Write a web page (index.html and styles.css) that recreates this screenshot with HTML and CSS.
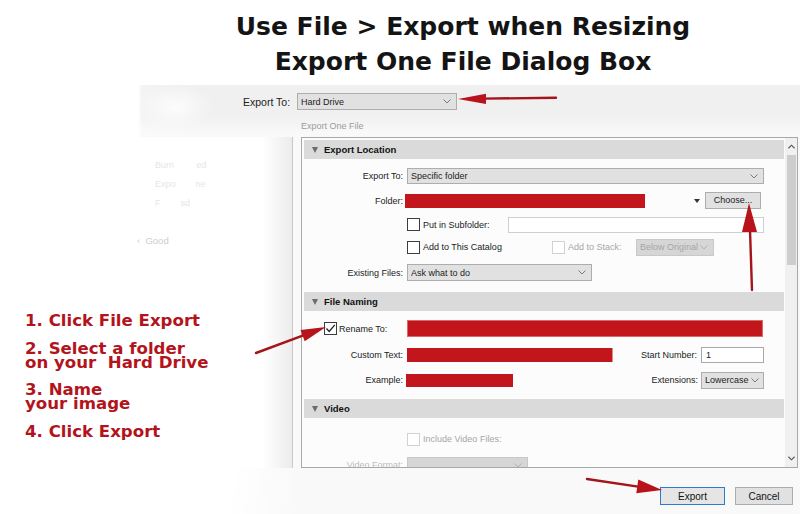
FILE: index.html
```html
<!DOCTYPE html>
<html lang="en">
<head>
<meta charset="utf-8">
<title>Export One File Dialog Box</title>
<link rel="stylesheet" href="styles.css">
</head>
<body>
<header class="title">
  <h1>Use File &gt; Export when Resizing<br>Export One File Dialog Box</h1>
</header>

<main class="dlg">
  <div class="dest">
    <span class="dest-lbl">Export To:</span>
    <div class="combo dest-combo"><span>Hard Drive</span><svg class="chev" viewBox="0 0 8 5"><polyline points="0.5,0.5 4,4 7.5,0.5"/></svg></div>
  </div>
  <div class="caption">Export One File</div>

  <div class="work">
    <aside class="side">
      <div class="ghost">
        <div>Burn&nbsp;&nbsp;&nbsp;&nbsp;&nbsp;&nbsp;&nbsp;&nbsp;&nbsp;ed</div>
        <div>Expo&nbsp;&nbsp;&nbsp;&nbsp;&nbsp;&nbsp;&nbsp;&nbsp;ne</div>
        <div>F&nbsp;&nbsp;&nbsp;&nbsp;&nbsp;&nbsp;&nbsp;&nbsp;sd</div>
      </div>
      <div class="ghost-good">‹&nbsp;&nbsp;Good</div>
      <div class="steps">
        <p>1. Click File Export</p>
        <p>2. Select a folder<br>on your&nbsp; Hard Drive</p>
        <p>3. Name<br>your image</p>
        <p>4. Click Export</p>
      </div>
    </aside>

    <section class="panel">
      <div class="panel-body">
        <div class="sec-h"><span class="tri"></span>Export Location</div>
        <div class="sec sec-loc">
          <div class="row h24">
            <span class="lbl">Export To:</span>
            <div class="combo ml4 w357"><span>Specific folder</span><svg class="chev" viewBox="0 0 8 5"><polyline points="0.5,0.5 4,4 7.5,0.5"/></svg></div>
          </div>
          <div class="row h25">
            <span class="lbl">Folder:</span>
            <div class="redact folder"></div>
            <span class="mini-tri"></span>
            <div class="btn-sm">Choose...</div>
          </div>
          <div class="row h23 ind">
            <label class="chk w101"><span class="box"></span>Put in Subfolder:</label>
            <div class="field w256"></div>
          </div>
          <div class="row h22 ind">
            <label class="chk w145"><span class="box"></span>Add to This Catalog</label>
            <label class="chk w84 dis"><span class="box"></span>Add to Stack:</label>
            <div class="combo combo-dis w78"><span>Below Original</span><svg class="chev" viewBox="0 0 8 5"><polyline points="0.5,0.5 4,4 7.5,0.5"/></svg></div>
          </div>
          <div class="row h29">
            <span class="lbl">Existing Files:</span>
            <div class="combo ml4 w185"><span>Ask what to do</span><svg class="chev" viewBox="0 0 8 5"><polyline points="0.5,0.5 4,4 7.5,0.5"/></svg></div>
          </div>
        </div>

        <div class="sec-h"><span class="tri"></span>File Naming</div>
        <div class="sec sec-name">
          <div class="row h25 ind-rename">
            <label class="chk w83"><span class="box box-on"><svg viewBox="0 0 11 11"><polyline points="1.5,5.5 4.2,8.5 9.8,1.8"/></svg></span>Rename To:</label>
            <div class="redact rename"></div>
          </div>
          <div class="row h28">
            <span class="lbl">Custom Text:</span>
            <div class="redact custom"></div>
            <span class="rlbl w84">Start Number:</span>
            <div class="field num">1</div>
          </div>
          <div class="row h22">
            <span class="lbl">Example:</span>
            <div class="redact example"></div>
            <span class="rlbl w185">Extensions:</span>
            <div class="combo ext"><span>Lowercase</span><svg class="chev" viewBox="0 0 8 5"><polyline points="0.5,0.5 4,4 7.5,0.5"/></svg></div>
          </div>
        </div>

        <div class="sec-h"><span class="tri"></span>Video</div>
        <div class="sec sec-video">
          <div class="row h26 ind">
            <label class="chk dis"><span class="box"></span>Include Video Files:</label>
          </div>
          <div class="row h26">
            <span class="lbl lbl-dis">Video Format:</span>
            <div class="combo combo-dis ml4 w121"><span></span><svg class="chev" viewBox="0 0 8 5"><polyline points="0.5,0.5 4,4 7.5,0.5"/></svg></div>
          </div>
        </div>
      </div>

      <div class="scroll">
        <div class="sc-btn"><svg viewBox="0 0 8 5"><polyline points="0.5,4.5 4,1 7.5,4.5"/></svg></div>
        <div class="sc-thumb"></div>
        <div class="sc-fill"></div>
        <div class="sc-btn"><svg viewBox="0 0 8 5"><polyline points="0.5,0.5 4,4 7.5,0.5"/></svg></div>
      </div>
    </section>
  </div>

  <div class="actions">
    <button class="btn btn-primary">Export</button>
    <button class="btn">Cancel</button>
  </div>
</main>

<svg class="arrows" viewBox="0 0 800 514" width="800" height="514">
  <g class="shaft">
    <path d="M484 98.6 L556 97.8"/>
    <path d="M750 230 L752 290"/>
    <path d="M256 353 L304 335.2"/>
    <path d="M587 479 L638 486.6"/>
  </g>
  <g class="head">
    <polygon points="458,99 486,93.8 486,104"/>
    <polygon points="749,203 742,232 757,232"/>
    <polygon points="326,327 300.5,330.1 304.7,341.3"/>
    <polygon points="662,490 638.3,479.5 636.3,493.3"/>
  </g>
</svg>
</body>
</html>
```

FILE: styles.css
```css
* { box-sizing: border-box; margin: 0; padding: 0; }

html, body {
  width: 800px;
  height: 514px;
  overflow: hidden;
  background: #fff;
}

body {
  position: relative;
  font-family: "Liberation Sans", Arial, sans-serif;
  color: #1e1e1e;
}

/* ---------- title ---------- */
.title {
  height: 85px;
  padding: 9px 0 0 126px;
  text-align: center;
}
.title h1 {
  font: bold 25px/35px "DejaVu Sans", sans-serif;
  color: #141414;
}

/* ---------- dialog surface ---------- */
.dlg {
  height: 429px;
  display: flex;
  flex-direction: column;
  background:
    radial-gradient(circle 260px at 40px 385px, #fff 74%, rgba(255,255,255,0) 100%),
    radial-gradient(ellipse 40px 22px at 175px 22px, rgba(255,255,255,.8), rgba(255,255,255,0)),
    linear-gradient(to bottom, rgba(255,255,255,0) 30px, rgba(255,255,255,.6) 48px),
    linear-gradient(to right, #fff 138px, #f3f3f3 142px, #f0f0f0 200px);
}

.dest {
  display: flex;
  align-items: center;
  padding: 7px 0 0 243px;
  height: 26px;
}
.dest-lbl {
  font-size: 10.5px;
  margin-right: 7px;
  color: #222;
}
.dest-combo {
  width: 160px;
  height: 19px;
  font-size: 10px;
  padding-left: 6px;
}

.caption {
  margin: 9px 0 5px;
  padding-left: 301px;
  height: 12px;
  font-size: 9px;
  line-height: 12px;
  color: #9c9c9c;
}

.work {
  display: flex;
  height: 331px;
}

/* ---------- left side ---------- */
.side {
  width: 293px;
  flex: none;
  border-right: 1px solid #c8c8c8;
  background: linear-gradient(to right, #fff 0, #fff 262px, #ececec 292px);
  padding-top: 19px;
}
.ghost {
  padding-left: 155px;
  font-size: 9px;
  line-height: 19px;
  color: #e6e6e6;
}
.ghost-good {
  margin-top: 18px;
  padding-left: 137px;
  font-size: 9.5px;
  line-height: 19px;
  color: #cdcdcd;
}
.steps {
  margin-top: 64px;
  padding-left: 25px;
  font: bold 16.6px/14px "DejaVu Sans", sans-serif;
  color: #b3141c;
  white-space: nowrap;
}
.steps p { margin-bottom: 13.5px; }

/* ---------- panel ---------- */
.panel {
  margin-left: 8px;
  width: 497px;
  height: 331px;
  border: 1px solid #a8a8a8;
  background: #fcfcfc;
  display: flex;
  overflow: hidden;
}
.panel-body {
  flex: 1;
  padding: 2px 1px 0 2px;
  overflow: hidden;
}

.sec-h {
  height: 19px;
  background: #dadada;
  display: flex;
  align-items: center;
  padding-left: 8px;
  font-size: 9.5px;
  font-weight: bold;
  color: #111;
}
.tri {
  width: 0;
  height: 0;
  border-left: 3.5px solid transparent;
  border-right: 3.5px solid transparent;
  border-top: 6px solid #6c6c6c;
  margin-right: 6px;
}

.sec-loc { padding: 5px 0 5px; }
.sec-name { padding: 5px 0 8px; }
.sec-video { padding-top: 8px; }

.row {
  display: flex;
  align-items: center;
  font-size: 9px;
  color: #222;
  white-space: nowrap;
}
.h22 { height: 22px; }
.h23 { height: 23px; }
.h24 { height: 24px; }
.h25 { height: 25px; }
.h26 { height: 26px; }
.h28 { height: 28px; }
.h29 { height: 29px; }

.ind { padding-left: 103px; }
.ind-rename { padding-left: 20px; }

.lbl {
  width: 99px;
  flex: none;
  text-align: right;
}
.lbl-dis { color: #bdbdbd; }
.rlbl {
  flex: none;
  text-align: right;
}
.ml4 { margin-left: 4px; }

.w78 { width: 78px; }
.w83 { width: 83px; }
.w84 { width: 84px; }
.w101 { width: 101px; }
.w121 { width: 121px; }
.w145 { width: 145px; }
.w185 { width: 185px; }
.w256 { width: 256px; }
.w357 { width: 357px; }

/* controls */
.combo {
  flex: none;
  height: 17px;
  display: flex;
  align-items: center;
  justify-content: space-between;
  padding: 0 5px 0 3px;
  background: #e1e1e1;
  border: 1px solid #adadad;
  font-size: 9px;
  color: #222;
  overflow: hidden;
}
.row .w357 { height: 16px; }
.combo span { overflow: hidden; }
.chev {
  width: 8px;
  height: 5px;
  flex: none;
  fill: none;
  stroke: #7a7a7a;
  stroke-width: 1;
}
.combo-dis {
  background: #d6d6d6;
  border-color: #c8c8c8;
  color: #a6a6a6;
}
.combo-dis .chev { stroke: #b0b0b0; }

.ext {
  width: 63px;
  margin-left: 3px;
  padding-right: 4px;
}
.ext span { width: 44px; }

.field {
  flex: none;
  height: 16px;
  background: #fff;
  border: 1px solid #cfcfcf;
  padding-left: 4px;
  font-size: 9px;
  line-height: 14px;
}
.num {
  width: 63px;
  margin-left: 4px;
  border-color: #a9a9a9;
}

.redact { flex: none; background: #c3161c; }
.folder { margin-left: 2px; width: 240px; height: 14px; }
.rename { width: 356px; height: 17px; border: 1px solid #d46a6a; }
.custom { margin-left: 4px; width: 206px; height: 14px; border-right: 1px solid #e08a8a; }
.example { margin-left: 3px; width: 107px; height: 13px; }

.mini-tri {
  width: 0;
  height: 0;
  margin-left: 49px;
  border-left: 3px solid transparent;
  border-right: 3px solid transparent;
  border-top: 4px solid #333;
}
.btn-sm {
  margin-left: 5px;
  width: 56px;
  height: 17px;
  background: #e1e1e1;
  border: 1px solid #adadad;
  font-size: 9px;
  line-height: 15px;
  text-align: center;
  color: #222;
}

.chk {
  display: flex;
  align-items: center;
  flex: none;
}
.box {
  width: 13px;
  height: 13px;
  flex: none;
  border: 1px solid #3d3d3d;
  background: #fff;
  margin-right: 3px;
}
.box-on { margin-right: 2px; display: flex; align-items: center; justify-content: center; }
.box-on svg {
  width: 11px;
  height: 11px;
  fill: none;
  stroke: #222;
  stroke-width: 1.3;
}
.dis { color: #a6a6a6; }
.dis .box { border-color: #d2d2d2; }

/* scrollbar */
.scroll {
  width: 12px;
  flex: none;
  background: #f0f0f0;
  display: flex;
  flex-direction: column;
  align-items: center;
}
.sc-btn {
  height: 17px;
  display: flex;
  align-items: center;
  justify-content: center;
}
.sc-btn svg {
  width: 7px;
  height: 5px;
  fill: none;
  stroke: #555;
  stroke-width: 1.3;
}
.sc-thumb {
  width: 9px;
  height: 110px;
  background: #cdcdcd;
}
.sc-fill { flex: 1; }

/* buttons */
.actions {
  height: 46px;
  display: flex;
  justify-content: flex-end;
  align-items: flex-start;
  padding: 19px 7px 0 0;
}
.btn {
  height: 18px;
  width: 58px;
  background: #e1e1e1;
  border: 1px solid #adadad;
  font: 10px "Liberation Sans", Arial, sans-serif;
  color: #111;
}
.btn-primary {
  width: 65px;
  margin-right: 10px;
  border-color: #2b7bd3;
  background: #e5e5e5;
}

/* annotation arrows (overlay) */
.arrows {
  position: absolute;
  left: 0;
  top: 0;
  pointer-events: none;
}
.shaft path {
  fill: none;
  stroke: #a4141a;
  stroke-width: 2.4;
  stroke-linecap: round;
}
.head polygon { fill: #b8121a; }
```
